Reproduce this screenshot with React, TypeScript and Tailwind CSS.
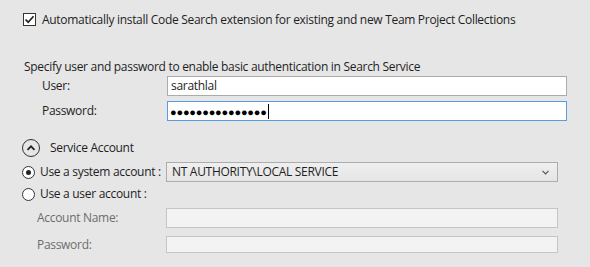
import React from "react";

function CheckBox() {
  return (
    <div className="w-[13px] h-[13px] border border-[#333] bg-white flex items-center justify-center shrink-0">
      <svg width="11" height="11" viewBox="0 0 11 11">
        <path d="M1.5 5.5 L4.2 8.2 L9.5 2.2" fill="none" stroke="#222" strokeWidth="1.7" />
      </svg>
    </div>
  );
}

function Radio({ checked }: { checked?: boolean }) {
  return (
    <div className="w-[13px] h-[13px] rounded-full border border-[#333] bg-white flex items-center justify-center shrink-0">
      {checked && <div className="w-[5px] h-[5px] rounded-full bg-[#222]" />}
    </div>
  );
}

export default function App() {
  return (
    <div className="w-[590px] h-[267px] bg-[#e6e6e6] overflow-hidden font-['Open_Sans',sans-serif] text-[12px] tracking-[-0.3px] text-[#1e1e1e] leading-none whitespace-nowrap">
      <div className="flex items-center pl-[23px] pt-[13px] h-[26px]">
        <CheckBox />
        <span className="ml-[6px] pt-[1px]">Automatically install Code Search extension for existing and new Team Project Collections</span>
      </div>

      <div className="mt-[33px] h-[16px] pl-[24px] flex items-center">
        Specify user and password to enable basic authentication in Search Service
      </div>

      <div className="mt-[1px] flex items-center h-[20px]">
        <span className="pl-[42px] w-[167px] shrink-0">User:</span>
        <div className="w-[400px] h-[20px] border border-[#ababab] bg-white flex items-center pl-[3px]">sarathlal</div>
      </div>

      <div className="mt-[5px] flex items-center h-[20px]">
        <span className="pl-[42px] w-[167px] shrink-0">Password:</span>
        <div className="w-[400px] h-[20px] border border-[#569de5] bg-white flex items-center pl-[2px]">
          <span className="text-[11px] tracking-[-0.2px] text-black">●●●●●●●●●●●●●●●</span>
          <span className="w-px h-[15px] bg-black ml-[1px]" />
        </div>
      </div>

      <div className="mt-[18px] flex items-center h-[18px] pl-[22px]">
        <div className="w-[18px] h-[18px] rounded-full border border-[#333] flex items-center justify-center shrink-0">
          <svg width="10" height="8" viewBox="0 0 10 8">
            <path d="M1.5 5.8 L5 2.3 L8.5 5.8" fill="none" stroke="#222" strokeWidth="1.8" />
          </svg>
        </div>
        <span className="ml-[10px]">Service Account</span>
      </div>

      <div className="mt-[5px] flex items-center h-[20px]">
        <div className="pl-[22px] w-[166px] shrink-0 flex items-center">
          <Radio checked />
          <span className="ml-[5px]">Use a system account :</span>
        </div>
        <div className="w-[392px] h-[20px] border border-[#acacac] bg-gradient-to-b from-[#efefef] to-[#e5e5e5] flex items-center pl-[5px] pr-[8px]">
          <span className="flex-1">NT AUTHORITY\LOCAL SERVICE</span>
          <svg width="7" height="5" viewBox="0 0 7 5">
            <path d="M0.5 0.8 L3.5 3.8 L6.5 0.8" fill="none" stroke="#555" strokeWidth="1.2" />
          </svg>
        </div>
      </div>

      <div className="mt-[2px] flex items-center h-[20px] pl-[22px]">
        <Radio />
        <span className="ml-[5px]">Use a user account :</span>
      </div>

      <div className="mt-[4px] flex items-center h-[20px] text-[#6d6d6d]">
        <span className="pl-[37px] w-[166px] shrink-0">Account Name:</span>
        <div className="w-[392px] h-[20px] border border-[#c5c5c5] bg-[#f3f3f3]" />
      </div>

      <div className="mt-[8px] flex items-center h-[17px] text-[#6d6d6d]">
        <span className="pl-[37px] w-[166px] shrink-0">Password:</span>
        <div className="w-[392px] h-[17px] border border-[#c5c5c5] bg-[#f3f3f3]" />
      </div>
    </div>
  );
}
